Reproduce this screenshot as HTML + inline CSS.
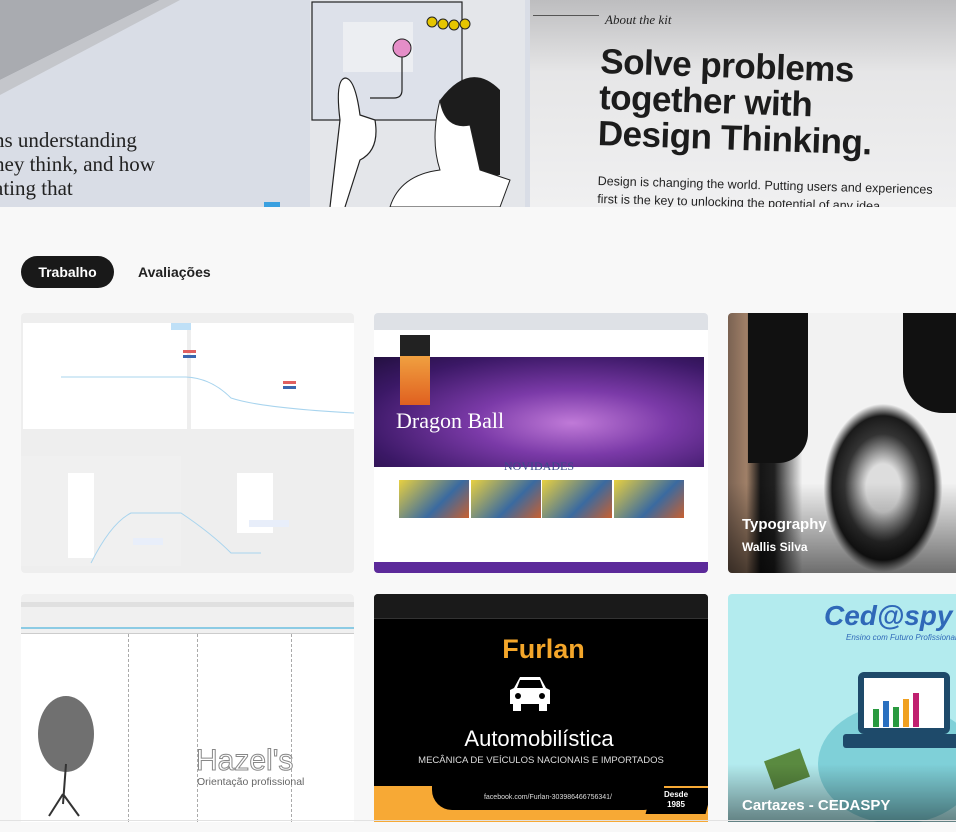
<!DOCTYPE html>
<html><head><meta charset="utf-8"><style>
*{margin:0;padding:0;box-sizing:border-box}
body{width:956px;height:832px;overflow:hidden;background:#f8f8f8;font-family:"Liberation Sans",sans-serif;position:relative}
.abs{position:absolute}
.card{position:absolute;border-radius:4px;overflow:hidden}
</style></head><body>
<div class="abs" style="left:0;top:0;width:956px;height:207px;background:linear-gradient(180deg,#bdbdbf 0%,#e6e6e7 35%,#f0f0f1 100%);overflow:hidden">
  <div class="abs" style="left:0;top:0;width:530px;height:207px;background:#d9dde6"></div>
  <svg class="abs" style="left:0;top:0" width="530" height="207"><polygon points="0,0 160,0 0,80" fill="#a9abb0"/><polygon points="160,0 0,80 0,95 180,0" fill="#c4c6cb"/>
  <rect x="310" y="0" width="215" height="207" fill="#e4e6ea"/>
  <rect x="312" y="2" width="150" height="118" fill="#dde1ea" stroke="#222" stroke-width="1.2"/>
  <rect x="343" y="22" width="70" height="50" fill="#eceef2"/>
  <circle cx="402" cy="48" r="9" fill="#e58ec8" stroke="#222"/>
  <path d="M402 57 L402 90 Q402 98 394 98 L370 98" stroke="#222" fill="none" stroke-width="1.2"/>
  <circle cx="432" cy="22" r="5" fill="#e5c500" stroke="#222"/><circle cx="443" cy="24" r="5" fill="#e5c500" stroke="#222"/><circle cx="454" cy="25" r="5" fill="#e5c500" stroke="#222"/><circle cx="465" cy="24" r="5" fill="#e5c500" stroke="#222"/>
  <path d="M330 207 L340 120 Q335 80 345 78 Q355 78 360 115 L375 120 Q380 150 360 160 L345 207" fill="#fff" stroke="#222" stroke-width="1.2"/>
  <path d="M440 100 Q470 60 500 90 L500 175 L470 180 Q430 150 440 100Z" fill="#1c1c1c"/>
  <path d="M440 100 Q445 130 470 125 L480 170 L510 180 L500 207 L390 207 Q400 175 440 170 Q430 140 440 100Z" fill="#fff" stroke="#222"/>
  <rect x="264" y="202" width="16" height="5" fill="#3aa0e0"/>
  </svg>
  <div class="abs" style="left:-6px;top:128px;font-family:'Liberation Serif',serif;font-size:21px;line-height:24px;color:#222">ns understanding<br>hey think, and how<br>ating that</div>
  <div class="abs" style="left:533px;top:15px;width:66px;height:1px;background:#555"></div>
  <div class="abs" style="left:605px;top:12px;font-family:'Liberation Serif',serif;font-style:italic;font-size:13px;color:#222">About the kit</div>
  <div class="abs" style="left:601px;top:44px;font-weight:bold;font-size:35px;line-height:36px;color:#1c1c1c;letter-spacing:-0.5px;transform:rotate(2deg);transform-origin:left top">Solve problems<br>together with<br>Design Thinking.</div>
  <div class="abs" style="left:598px;top:172px;font-size:12.5px;line-height:18px;color:#222;transform:rotate(1.5deg);transform-origin:left top">Design is changing the world. Putting users and experiences<br>first is the key to unlocking the potential of any idea</div>
</div>
<div class="abs" style="left:21px;top:256px;width:93px;height:32px;border-radius:16px;background:#191919;color:#fff;font-weight:bold;font-size:14px;line-height:32px;text-align:center">Trabalho</div>
<div class="abs" style="left:138px;top:256px;font-weight:bold;font-size:14px;line-height:32px;color:#222">Avaliações</div>
<div class="card" style="left:21px;top:313px;width:333px;height:260px;background:#eeeeee">
  <div class="abs" style="left:2px;top:10px;width:164px;height:106px;background:#fff"></div>
  <div class="abs" style="left:170px;top:10px;width:163px;height:106px;background:#fff"></div>
  <div class="abs" style="left:0;top:143px;width:160px;height:110px;background:#f0f0f0"></div>
  <div class="abs" style="left:47px;top:160px;width:26px;height:85px;background:#fff"></div>
  <div class="abs" style="left:216px;top:160px;width:36px;height:60px;background:#fff"></div>
  <svg class="abs" style="left:0;top:0" width="333" height="260"><path d="M40 64 L165 64 Q190 65 210 85 Q240 95 333 100" stroke="#a8d4ee" fill="none"/><path d="M70 250 Q90 210 110 200 L160 200 Q190 220 210 240 L240 240" stroke="#a8d4ee" fill="none"/><rect x="150" y="10" width="20" height="7" fill="#bfe0f7"/><rect x="162" y="37" width="13" height="3" fill="#e06060"/><rect x="162" y="42" width="13" height="3" fill="#3a68b0"/><rect x="262" y="68" width="13" height="3" fill="#e06060"/><rect x="262" y="73" width="13" height="3" fill="#3a68b0"/><rect x="112" y="225" width="30" height="7" fill="#e8eefa"/><rect x="228" y="207" width="40" height="7" fill="#e8eefa"/></svg>
</div>
<div class="card" style="left:374px;top:313px;width:334px;height:260px;background:#fff">
  <div class="abs" style="left:0;top:0;width:334px;height:17px;background:#dee1e6"></div>
  <div class="abs" style="left:0;top:44px;width:330px;height:110px;background:radial-gradient(ellipse at 60% 60%,#c07ad8 0%,#7b3aa8 35%,#3b1866 75%,#231040 100%)"></div>
  <div class="abs" style="left:22px;top:95px;font-family:'Liberation Serif',serif;font-size:22px;color:#fff">Dragon Ball</div>
  <div class="abs" style="left:26px;top:22px;width:30px;height:70px;background:linear-gradient(#222 30%,#f0a040 30%,#e06020)"></div>
  <div class="abs" style="left:0;top:146px;width:330px;font-family:'Liberation Serif',serif;font-size:12px;color:#3a4a8a;text-align:center">NOVIDADES</div>
  <div class="abs" style="left:25px;top:167px;width:70px;height:38px;background:linear-gradient(135deg,#e8d040,#3a6aa0 60%,#c86030)"></div>
  <div class="abs" style="left:97px;top:167px;width:70px;height:38px;background:linear-gradient(135deg,#e8d040,#3a6aa0 60%,#c86030)"></div>
  <div class="abs" style="left:168px;top:167px;width:70px;height:38px;background:linear-gradient(135deg,#e8d040,#3a6aa0 60%,#c86030)"></div>
  <div class="abs" style="left:240px;top:167px;width:70px;height:38px;background:linear-gradient(135deg,#e8d040,#3a6aa0 60%,#c86030)"></div>
  <div class="abs" style="left:0;top:249px;width:334px;height:11px;background:#5c2a9a"></div>
</div>
<div class="card" style="left:728px;top:313px;width:232px;height:260px;background:linear-gradient(90deg,#7a6252 0,#a08068 8%,#151515 14%,#202020 20%,#f2f2f2 32%,#f2f2f2 100%)">
  <div class="abs" style="left:20px;top:0;width:60px;height:150px;background:#111;border-radius:0 0 30px 0"></div>
  <div class="abs" style="left:175px;top:0;width:60px;height:100px;background:#111;border-radius:0 0 0 40px"></div>
  <div class="abs" style="left:95px;top:90px;width:120px;height:170px;background:radial-gradient(ellipse,#ddd 20%,#333 45%,#1a1a1a 60%,transparent 70%)"></div>
  <div class="abs" style="left:0;top:170px;width:232px;height:90px;background:linear-gradient(transparent,rgba(0,0,0,.55))"></div>
  <div class="abs" style="left:14px;top:203px;color:#fff;font-weight:bold;font-size:15px">Typography</div>
  <div class="abs" style="left:14px;top:227px;color:#fff;font-weight:bold;font-size:12px">Wallis Silva</div>
</div>
<div class="card" style="left:21px;top:594px;width:333px;height:228px;background:#fff;border-radius:4px 4px 0 0">
  <div class="abs" style="left:0;top:0;width:333px;height:40px;background:#f0f0f0;border-bottom:1px solid #ccc"></div>
  <div class="abs" style="left:0;top:8px;width:333px;height:5px;background:#e0e0e0"></div>
  <div class="abs" style="left:0;top:33px;width:333px;height:2px;background:#8ccbe4"></div>
  <div class="abs" style="left:107px;top:40px;width:1px;height:188px;border-left:1px dashed #aaa"></div>
  <div class="abs" style="left:176px;top:40px;width:1px;height:188px;border-left:1px dashed #aaa"></div>
  <div class="abs" style="left:270px;top:40px;width:1px;height:188px;border-left:1px dashed #aaa"></div>
  <svg class="abs" style="left:0;top:0" width="333" height="228"><ellipse cx="45" cy="140" rx="28" ry="38" fill="#333" opacity=".7"/><path d="M45 170 L42 210 M42 200 L28 222 M42 200 L58 222" stroke="#333" stroke-width="2"/></svg>
  <div class="abs" style="left:175px;top:152px;font-size:30px;color:#fff;-webkit-text-stroke:1px #888;line-height:30px">Hazel's</div>
  <div class="abs" style="left:176px;top:182px;font-size:10.5px;color:#666">Orientação profissional</div>
</div>
<div class="card" style="left:374px;top:594px;width:334px;height:228px;background:#000;border-radius:4px 4px 0 0">
  <div class="abs" style="left:0;top:0;width:334px;height:25px;background:#1a1a1a;border-bottom:1px solid #333"></div>
  <div class="abs" style="left:0;top:40px;width:334px;text-align:center;color:#f4a62a;font-weight:bold;font-size:27px;padding-left:5px">Furlan</div>
  <svg class="abs" style="left:132px;top:80px" width="48" height="38"><path d="M8 14 L14 3 L34 3 L40 14 L44 16 L44 30 L4 30 L4 16Z" fill="#fff"/><path d="M14 6 L34 6 L37 14 L11 14Z" fill="#000"/><circle cx="12" cy="22" r="3" fill="#000"/><circle cx="36" cy="22" r="3" fill="#000"/><rect x="7" y="30" width="8" height="7" fill="#fff"/><rect x="33" y="30" width="8" height="7" fill="#fff"/></svg>
  <div class="abs" style="left:0;top:132px;width:310px;text-align:center;color:#fff;font-size:22px;padding-left:20px">Automobilística</div>
  <div class="abs" style="left:0;top:161px;width:334px;text-align:center;color:#ddd;font-size:9.5px">MECÂNICA DE VEÍCULOS NACIONAIS E IMPORTADOS</div>
  <div class="abs" style="left:0;top:192px;width:334px;height:36px;background:#f7a935"></div>
  <div class="abs" style="left:58px;top:192px;width:232px;height:24px;background:#000;border-radius:0 0 20px 20px;color:#ddd;font-size:7px;text-align:center;line-height:24px">facebook.com/Furlan-303986466756341/</div>
  <div class="abs" style="left:275px;top:194px;width:60px;height:26px;background:#000;transform:skewX(-15deg)"></div>
  <div class="abs" style="left:290px;top:196px;color:#fff;font-size:8px;font-weight:bold;line-height:10px;text-align:center">Desde<br>1985</div>
</div>
<div class="card" style="left:728px;top:594px;width:232px;height:228px;background:#b3ebee;border-radius:4px 0 0 0">
  <div class="abs" style="left:96px;top:6px;color:#2f68b8;font-weight:bold;font-style:italic;font-size:28px">Ced@spy</div>
  <div class="abs" style="left:118px;top:39px;color:#2f68b8;font-style:italic;font-size:8px">Ensino com Futuro Profissional</div>
  <div class="abs" style="left:90px;top:110px;width:160px;height:120px;border-radius:50%;background:#7fd0d8"></div>
  <div class="abs" style="left:130px;top:78px;width:92px;height:62px;border:6px solid #1e4a6a;border-radius:6px;background:#fff"></div>
  <div class="abs" style="left:115px;top:140px;width:120px;height:14px;background:#1e4a6a;border-radius:3px"></div>
  <svg class="abs" style="left:140px;top:95px" width="70" height="40"><rect x="5" y="20" width="6" height="18" fill="#2a9a40"/><rect x="15" y="12" width="6" height="26" fill="#2a70c0"/><rect x="25" y="18" width="6" height="20" fill="#2a9a40"/><rect x="35" y="10" width="6" height="28" fill="#f0a020"/><rect x="45" y="4" width="6" height="34" fill="#c02070"/></svg>
  <div class="abs" style="left:40px;top:160px;width:38px;height:30px;background:#5a8a40;transform:rotate(-20deg)"></div>
  <div class="abs" style="left:0;top:170px;width:232px;height:58px;background:linear-gradient(transparent,rgba(0,0,0,.45))"></div>
  <div class="abs" style="left:14px;top:203px;color:#fff;font-weight:bold;font-size:15px">Cartazes - CEDASPY</div>
</div>
<div class="abs" style="left:0;top:820px;width:956px;height:1px;background:#e2e2e2"></div>
</body></html>
